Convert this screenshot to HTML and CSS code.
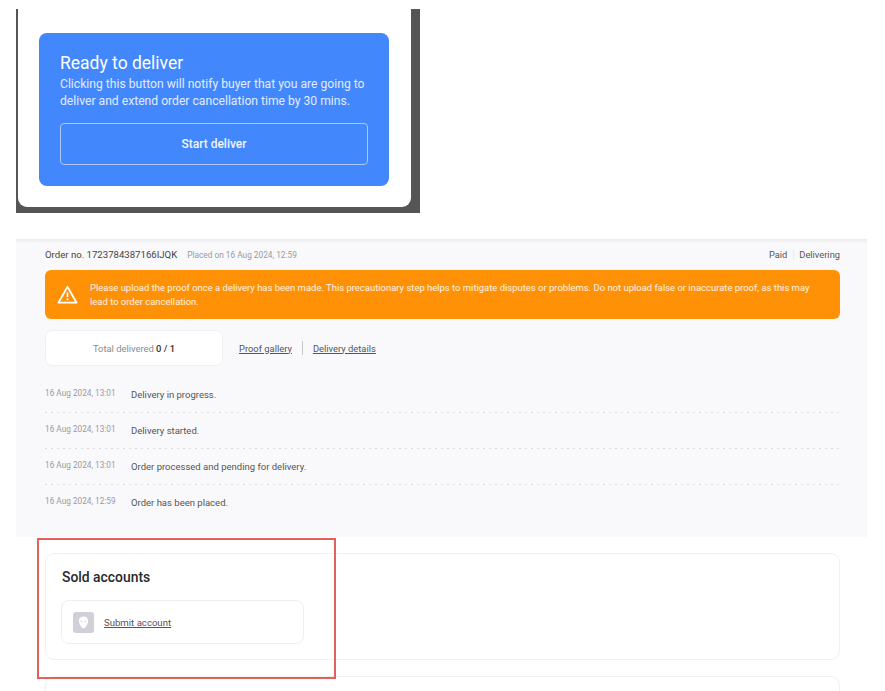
FILE: index.html
```html
<!DOCTYPE html>
<html lang="en">
<head>
    <meta charset="UTF-8" />
    <title>Order details</title>
    <link rel="stylesheet" href="styles.css">
</head>
<body>
    <div class="modal-shot">
        <div class="modal">
            <div class="ready-card">
                <h2>Ready to deliver</h2>
                <p>Clicking this button will notify buyer that you are going to deliver and extend order cancellation time by 30 mins.</p>
                <button type="button" class="btn-start">Start deliver</button>
            </div>
        </div>
    </div>

    <section class="order">
        <div class="order-head">
            <span class="order-no">Order no. 1723784387166IJQK</span>
            <span class="placed">Placed on 16 Aug 2024, 12:59</span>
            <span class="status">
                <span class="status-paid">Paid</span>
                <span>Delivering</span>
            </span>
        </div>
        <div class="warning">
            <svg class="warning-icon" viewBox="0 0 24 22" aria-hidden="true">
                <path d="M12 2 L22.5 20.5 H1.5 Z" fill="none" stroke="#fff" stroke-width="2" stroke-linejoin="round" />
                <path d="M12 8.5 V14" stroke="#fff" stroke-width="2" />
                <path d="M12 15.6 V17.6" stroke="#fff" stroke-width="2" />
            </svg>
            <p>Please upload the proof once a delivery has been made. This precautionary step helps to mitigate disputes or problems. Do not upload false or inaccurate proof, as this may lead to order cancellation.</p>
        </div>
        <div class="delivery-row">
            <div class="total">Total delivered <b>0 / 1</b></div>
            <a class="link" href="#">Proof gallery</a>
            <span class="divider"></span>
            <a class="link" href="#">Delivery details</a>
        </div>
        <ul class="timeline">
            <li><time>16 Aug 2024, 13:01</time><span>Delivery in progress.</span></li>
            <li><time>16 Aug 2024, 13:01</time><span>Delivery started.</span></li>
            <li><time>16 Aug 2024, 13:01</time><span>Order processed and pending for delivery.</span></li>
            <li><time>16 Aug 2024, 12:59</time><span>Order has been placed.</span></li>
        </ul>
    </section>

    <section class="sold">
        <div class="sold-card">
            <h3>Sold accounts</h3>
            <div class="submit-row">
                <span class="avatar">
                    <svg viewBox="0 0 12 14" width="11" height="13" aria-hidden="true">
                        <path d="M6 .5C9.2 .5 11 2.4 11 5.2 11 8.6 8.2 13.5 6 13.5S1 8.6 1 5.2C1 2.4 2.8 .5 6 .5Z" fill="#fff" />
                        <path d="M2.8 5.4 5 6.4M9.2 5.4 7 6.4" stroke="#c9cad2" stroke-width=".9" />
                    </svg>
                </span>
                <a class="link" href="#">Submit account</a>
            </div>
        </div>
        <div class="next-card"></div>
        <div class="highlight"></div>
    </section>
</body>
</html>
```

FILE: styles.css
```css
* {
    box-sizing: border-box;
}
html, body {
    height: 691px;
    overflow: hidden;
}
body {
    margin: 0;
    padding-top: 9px;
    background: #fff;
    color: #333;
    font-family: Roboto, "Liberation Sans", sans-serif;
}

/* Modal screenshot */
.modal-shot {
    width: 404px;
    height: 204px;
    margin-left: 16px;
    padding: 0 9px 6px 2px;
    background: #555;
}
.modal {
    height: 198px;
    padding: 24px 21px 0;
    background: #fff;
    border-radius: 0 0 9px 9px;
}
.ready-card {
    width: 350px;
    height: 153px;
    padding: 20px 21px;
    background: #4387fd;
    border-radius: 8px;
    color: #fff;
}
.ready-card h2 {
    margin: 0 0 2px;
    font-size: 17.5px;
    font-weight: 400;
    line-height: 21px;
}
.ready-card p {
    margin: 0;
    font-size: 12.15px;
    line-height: 17px;
    color: #e1ebff;
}
.btn-start {
    display: block;
    width: 308px;
    height: 42px;
    margin-top: 13px;
    background: transparent;
    border: 1px solid #a9c7fb;
    border-radius: 4px;
    color: #f0f5ff;
    font-family: inherit;
    font-size: 12px;
    font-weight: 500;
}

/* Order section */
.order {
    width: 851px;
    height: 298px;
    margin: 26px 0 0 16px;
    padding: 0 27px 0 29px;
    background: #f9f9fb;
    box-shadow: inset 0 4px 4px -3px #e4e4e6;
}
.order-head {
    display: flex;
    align-items: center;
    height: 31px;
    font-size: 9.6px;
}
.order-no {
    color: #444;
}
.placed {
    margin-left: 10px;
    font-size: 8.3px;
    color: #9a9a9f;
}
.status {
    display: flex;
    margin-left: auto;
    font-size: 9.3px;
    color: #555;
}
.status-paid {
    padding-right: 6px;
    margin-right: 5px;
    border-right: 1px solid #eaeaec;
}
.warning {
    display: flex;
    align-items: center;
    height: 49px;
    padding: 0 20px 0 12px;
    background: #ff9107;
    border-radius: 6px;
    color: #fff3e2;
}
.warning-icon {
    flex: none;
    width: 21px;
    height: 19px;
    margin-right: 12px;
}
.warning p {
    margin: 0;
    font-size: 9.46px;
    line-height: 14px;
}
.delivery-row {
    display: flex;
    align-items: center;
    margin-top: 11px;
    font-size: 9.4px;
}
.total {
    width: 178px;
    height: 36px;
    margin-right: 16px;
    background: #fff;
    border: 1px solid #efeff1;
    border-radius: 7px;
    color: #8a8a8f;
    line-height: 35px;
    text-align: center;
}
.total b {
    font-weight: 500;
    color: #333;
}
.link {
    color: #555;
    text-decoration: underline;
}
.divider {
    width: 1px;
    height: 14px;
    margin: 0 10px;
    background: #c8c8cc;
}
.timeline {
    margin: 11px 0 0;
    padding: 0;
    list-style: none;
}
.timeline li {
    display: flex;
    align-items: center;
    height: 36px;
    padding-bottom: 2px;
    /* sparse dots, wider apart than border-style: dotted gives */
    background: repeating-linear-gradient(90deg, #dcdce0 0 2px, transparent 2px 6px) left bottom / 100% 1px no-repeat;
    font-size: 9.5px;
    color: #555;
}
.timeline li:last-child {
    background: none;
}
.timeline time {
    width: 86px;
    margin-top: -3px;
    font-size: 8.25px;
    color: #9a9a9f;
}

/* Sold accounts */
.sold {
    position: relative;
    padding: 16px 45px 0 45px;
}
.sold-card {
    height: 107px;
    padding: 15px;
    background: #fff;
    border: 1px solid #f1f1f3;
    border-radius: 9px;
}
.sold-card h3 {
    margin: 0 0 0 1px;
    font-size: 13.9px;
    font-weight: 500;
    line-height: 17px;
    color: #2a2a2a;
}
.submit-row {
    display: flex;
    align-items: center;
    gap: 10px;
    width: 243px;
    height: 44px;
    margin-top: 14px;
    padding-left: 11px;
    border: 1px solid #eeeef0;
    border-radius: 8px;
    font-size: 9.6px;
}
.avatar {
    display: flex;
    align-items: center;
    justify-content: center;
    width: 21px;
    height: 21px;
    background: #cfd0d8;
    border-radius: 3px;
}
.next-card {
    height: 40px;
    margin-top: 16px;
    border: 1px solid #f1f1f3;
    border-radius: 9px;
}
.highlight {
    position: absolute;
    top: 1px;
    left: 37px;
    width: 299px;
    height: 141px;
    border: 2px solid #e5605c;
}
```
